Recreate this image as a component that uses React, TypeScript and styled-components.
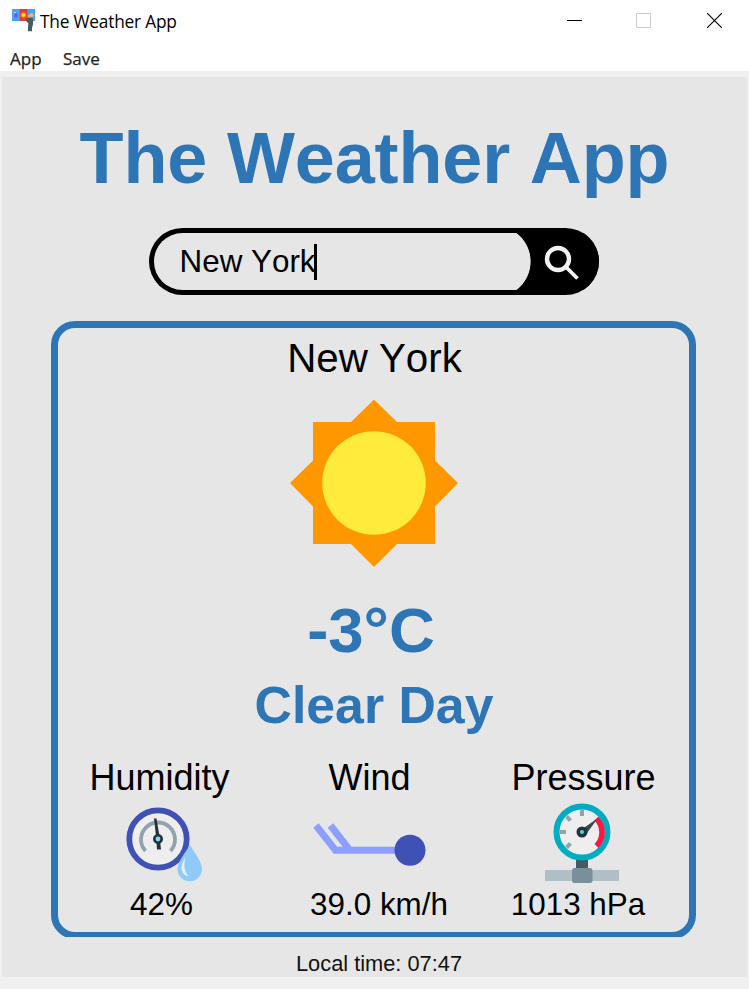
import React from "react";
import styled, { createGlobalStyle } from "styled-components";

const BLUE = "#2e75b6";
const GREY = "#e6e6e6";

const GlobalStyle = createGlobalStyle`
  * { box-sizing: border-box; }
  body { margin: 0; background: #f0f0f0; }
  svg { display: block; flex: none; }
`;

const Window = styled.div`
  width: 749px;
  height: 989px;
  display: flex;
  flex-direction: column;
  overflow: hidden;
  background: #f0f0f0;
  color: #000;
  font-family: "Liberation Sans", Arial, sans-serif;
  font-kerning: none;
  white-space: nowrap;
`;

const TitleBar = styled.header`
  height: 41px;
  flex: none;
  display: flex;
  align-items: center;
  padding: 0 27px 0 12px;
  background: #fff;
`;

const WindowTitle = styled.span`
  margin: 2px auto 0 5px;
  font: 17.3px/24px "Open Sans", "Noto Sans", sans-serif;
  letter-spacing: -0.2px;
`;

const WindowControls = styled.div`
  display: flex;
  align-items: center;
  gap: 54px;

  & > :last-child {
    margin-left: 2px;
  }
`;

const MenuBar = styled.nav`
  height: 30px;
  flex: none;
  display: flex;
  gap: 21px;
  padding: 6px 10px 0;
  background: #fff;
`;

const MenuItem = styled.span<{ $width: number }>`
  width: ${(p) => p.$width}px;
  font: 17px/24px "Open Sans", "Noto Sans", sans-serif;
  color: #222;
  -webkit-text-stroke: 0.25px #222;
`;

const Content = styled.main`
  width: 745px;
  height: 900px;
  margin: 6px 2px 0;
  padding-right: 2px;
  flex: none;
  display: flex;
  flex-direction: column;
  align-items: center;
  background: ${GREY};
`;

const Heading = styled.h1`
  margin: 41px 0 0 2px;
  font-size: 72px;
  line-height: 80px;
  font-weight: 700;
  letter-spacing: -0.15px;
  color: ${BLUE};
`;

const SearchBox = styled.div`
  width: 450px;
  height: 67px;
  margin-top: 30px;
  padding: 5px 0 5px 5px;
  flex: none;
  display: flex;
  border-radius: 34px;
  overflow: hidden;
  background: #000;
`;

const SearchText = styled.div`
  flex: 1;
  display: flex;
  align-items: center;
  padding-left: 26px;
  border-radius: 29px 0 0 29px;
  background: ${GREY};
  font-size: 31.4px;
  line-height: 36px;
`;

const Caret = styled.span`
  width: 3px;
  height: 36px;
  margin-left: -2px;
  background: #000;
`;

const SearchButton = styled.button`
  width: 84px;
  height: 57px;
  padding: 2px 0 0 29px;
  flex: none;
  border: 0;
  background: radial-gradient(circle 36px at -20px 50%, ${GREY} 35.2px, #000 36px);
`;

const Card = styled.section`
  width: 645px;
  height: 618px;
  margin-top: 26px;
  flex: none;
  display: flex;
  flex-direction: column;
  align-items: center;
  border: 7px solid ${BLUE};
  border-radius: 24px;
  clip-path: inset(0 0 2px 0);
`;

const City = styled.div`
  margin: 8px 0 16px 2px;
  font-size: 40.3px;
  line-height: 46px;
`;

const Temperature = styled.div`
  margin: 27px 5px 0 0;
  font-size: 63.5px;
  line-height: 70px;
  font-weight: 700;
  color: ${BLUE};
`;

const Condition = styled.div`
  margin: 10px 0 0 1px;
  font-size: 51.8px;
  line-height: 60px;
  font-weight: 700;
  color: ${BLUE};
`;

const Metrics = styled.div`
  width: 100%;
  margin-top: 22px;
  display: grid;
  grid-template-columns: 203px 217px 1fr;
`;

const Metric = styled.div`
  display: flex;
  flex-direction: column;
  align-items: center;
`;

const MetricName = styled.div`
  font-size: 36px;
  line-height: 42px;
`;

const MetricIcon = styled.div<{ $shift: number; $top: number }>`
  height: 88px;
  padding-top: ${(p) => p.$top}px;
  margin-left: ${(p) => p.$shift}px;
`;

const MetricValue = styled.div<{ $shift: number }>`
  margin-left: ${(p) => p.$shift}px;
  font-size: 31.4px;
  line-height: 36px;
`;

const LocalTime = styled.footer`
  margin: 12px 0 0 11px;
  font-size: 21.8px;
  line-height: 26px;
  color: #111;
`;

const AppIcon = () => (
  <svg width="23" height="23" viewBox="0 0 69 69">
    <path fill="#42a5f5" d="M0 0h69v36H0z" />
    <path fill="#e53935" d="M23 0h23v36H23z" />
    <path fill="#7c4dff" d="M12 10l5 8a5.500 5.500 0 1 1-10 0z" />
    <path fill="#e1bee7" d="M5 9h7v3H5z" />
    <circle cx="34.500" cy="18" r="8" fill="#ff9800" />
    <circle cx="34.500" cy="18" r="4.500" fill="#ffeb3b" />
    <path fill="#ffb74d" d="M47 23q0-6 6-6 2-7 9-4 4 3 2 10z" />
    <path fill="#455a64" d="M43 29q10-5 20-1v17q-1 6-3 11v11H48V53l1-12q-6 0-6-5z" />
  </svg>
);

const SunIcon = () => (
  <svg width="170" height="170" viewBox="0 0 170 170">
    <path fill="#ff9800" d="M85 1.500L108 24h38v38.500L169 85l-23 23.500V146h-38L85 169l-23-23H24v-37.500L1 85l23-22.500V24h38z" />
    <circle cx="85" cy="85" r="51.800" fill="#ffeb3b" />
  </svg>
);

const HumidityIcon = () => (
  <svg width="76" height="76" viewBox="0 0 76 76">
    <circle cx="32" cy="32" r="28.700" fill="#eee" stroke="#3f51b5" strokeWidth="5.800" />
    <path fill="none" stroke="#90a4ae" strokeWidth="3.800" d="M19.500 44a17 17 0 1 1 25 0" />
    <path fill="#263238" d="M28 11.500h2.500l3 17.500 1.500 13.500h-4l-1-13.500z" />
    <circle cx="32" cy="32" r="3.700" fill="#81d4fa" stroke="#263238" strokeWidth="2.600" />
    <path fill="#90caf9" d="M64 38c5 8 12 17 12 24a12 12 0 0 1-24.500 0C51.500 55 59 46 64 38z" />
    <path fill="#e3f2fd" d="M59.500 50c-4 7-5 11-3 15 1.500 3 4 4 6.500 4-5-4-5.500-10-3.500-19z" />
  </svg>
);

const WindIcon = () => (
  <svg width="114" height="76" viewBox="0 0 114 76">
    <path fill="none" stroke="#8c9eff" strokeWidth="7" d="M3 18.500L22.500 43.300H85M17.500 18.500L37 43.300" />
    <circle cx="97" cy="43.300" r="15.500" fill="#3f51b5" />
  </svg>
);

const PressureIcon = () => (
  <svg width="74" height="80" viewBox="0 0 74 80">
    <path fill="#b0bec5" d="M0 67h74v11H0z" />
    <path fill="#455a64" d="M31 55h12v12H31z" />
    <rect x="27" y="65" width="20.500" height="15" rx="2.500" fill="#78909c" />
    <circle cx="37" cy="29" r="25.500" fill="#eee" stroke="#00acc1" strokeWidth="6" />
    <path stroke="#90a4ae" strokeWidth="4" d="M37 7v6M15 29h6M21.500 13.500l4 4M21.500 44.500l4-4" />
    <path fill="none" stroke="#ff1744" strokeWidth="5.500" d="M51.500 15.500a20 20 0 0 1 0 27.500" />
    <path fill="#37474f" d="M53 15L42 30l-4-4.500z" />
    <circle cx="37" cy="29" r="3.800" fill="#4dd0e1" stroke="#263238" strokeWidth="3.400" />
  </svg>
);

const metrics = [
  { name: "Humidity", value: "42%", icon: <HumidityIcon />, iconTop: 8, iconShift: 8, valueShift: 4 },
  { name: "Wind", value: "39.0 km/h", icon: <WindIcon />, iconTop: 8, iconShift: 0, valueShift: 19 },
  { name: "Pressure", value: "1013 hPa", icon: <PressureIcon />, iconTop: 4, iconShift: -3, valueShift: -11 },
];

export default function App() {
  return (
    <>
      <GlobalStyle />
      <Window>
        <TitleBar>
          <AppIcon />
          <WindowTitle>The Weather App</WindowTitle>
          <WindowControls>
            <svg width="15" height="15" viewBox="0 0 15 15"><path fill="#000" d="M0 7h15v1H0z" /></svg>
            <svg width="15" height="15" viewBox="0 0 15 15"><path fill="none" stroke="#ccc" d="M.5.5h14v14H.5z" /></svg>
            <svg width="15" height="15" viewBox="0 0 15 15"><path stroke="#000" strokeWidth="1.100" d="M0 0l15 15M15 0L0 15" /></svg>
          </WindowControls>
        </TitleBar>
        <MenuBar>
          <MenuItem $width={32}>App</MenuItem>
          <MenuItem $width={40}>Save</MenuItem>
        </MenuBar>
        <Content>
          <Heading>The Weather App</Heading>
          <SearchBox>
            <SearchText>
              New York
              <Caret />
            </SearchText>
            <SearchButton aria-label="Search">
              <svg width="35" height="35" viewBox="0 0 35 35" fill="none" stroke="#f2f2f2">
                <circle cx="14" cy="14" r="11" strokeWidth="4.400" />
                <path strokeWidth="3.800" d="M21.500 21.500l12 12" />
              </svg>
            </SearchButton>
          </SearchBox>
          <Card>
            <City>New York</City>
            <SunIcon />
            <Temperature>-3°C</Temperature>
            <Condition>Clear Day</Condition>
            <Metrics>
              {metrics.map((m) => (
                <Metric key={m.name}>
                  <MetricName>{m.name}</MetricName>
                  <MetricIcon $shift={m.iconShift} $top={m.iconTop}>{m.icon}</MetricIcon>
                  <MetricValue $shift={m.valueShift}>{m.value}</MetricValue>
                </Metric>
              ))}
            </Metrics>
          </Card>
          <LocalTime>Local time: 07:47</LocalTime>
        </Content>
      </Window>
    </>
  );
}
